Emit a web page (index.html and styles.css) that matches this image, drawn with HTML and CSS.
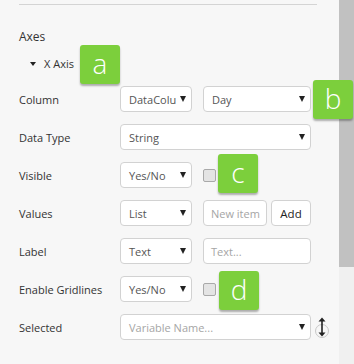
FILE: index.html
```html
<!DOCTYPE html>
<html lang="en">
<head>
  <meta charset="UTF-8">
  <meta name="viewport" content="width=device-width, initial-scale=1.0">
  <title>Axes</title>
  <link rel="stylesheet" href="styles.css">
</head>
<body>
  <div class="screen">
    <div class="panel">
      <div class="rule"></div>
      <h4 class="section-title">Axes</h4>
      <div class="axis-toggle"><span class="caret-down"></span>X Axis</div>

      <div class="fields">
        <div class="field-label">Column</div>
        <div class="controls">
          <div class="select small"><span>DataColu</span><i class="arrow"></i></div>
          <div class="select medium"><span>Day</span><i class="arrow"></i></div>
        </div>

        <div class="field-label">Data Type</div>
        <div class="controls">
          <div class="select wide"><span>String</span><i class="arrow"></i></div>
        </div>

        <div class="field-label">Visible</div>
        <div class="controls">
          <div class="select small"><span>Yes/No</span><i class="arrow"></i></div>
          <span class="checkbox"></span>
        </div>

        <div class="field-label">Values</div>
        <div class="controls">
          <div class="select small"><span>List</span><i class="arrow"></i></div>
          <div class="input short placeholder">New item</div>
          <div class="btn">Add</div>
        </div>

        <div class="field-label">Label</div>
        <div class="controls">
          <div class="select small"><span>Text</span><i class="arrow"></i></div>
          <div class="input medium placeholder">Text...</div>
        </div>

        <div class="field-label">Enable Gridlines</div>
        <div class="controls">
          <div class="select small"><span>Yes/No</span><i class="arrow"></i></div>
          <span class="checkbox"></span>
        </div>

        <div class="field-label">Selected</div>
        <div class="controls">
          <div class="select wide"><span class="placeholder">Variable Name...</span><i class="arrow"></i></div>
          <svg class="sort-icon" width="16" height="26" viewBox="0 0 16 26">
            <circle cx="8" cy="17" r="6.5" fill="none" stroke="#c8c8c8" stroke-width="1"/>
            <line x1="8" y1="5" x2="8" y2="21" stroke="#222" stroke-width="1.6"/>
            <path d="M4.5 7.5 L8 3.5 L11.5 7.5 Z" fill="#222"/>
            <path d="M4.5 18.5 L8 22.5 L11.5 18.5 Z" fill="#222"/>
          </svg>
        </div>
      </div>
    </div>

    <div class="scrollbar"><div class="thumb"></div></div>

    <div class="badge badge-a">a</div>
    <div class="badge badge-b">b</div>
    <div class="badge badge-c">c</div>
    <div class="badge badge-d">d</div>
  </div>
</body>
</html>
```

FILE: styles.css
```css
body {
  margin: 0;
  font-family: "Open Sans", Arial, sans-serif;
  background: #f7f7f7;
  color: #333333;
}

.screen {
  position: relative;
  display: flex;
  width: 354px;
  height: 364px;
  overflow: hidden;
}

.panel {
  width: 320px;
  padding: 4px 0 0 19px;
}

.rule {
  width: 298px;
  height: 1px;
  background: #d4d4d4;
}

.section-title {
  margin: 24px 0 0;
  font-size: 12px;
  font-weight: 400;
  line-height: 16px;
}

.axis-toggle {
  display: flex;
  align-items: center;
  margin: 11px 0 0 11px;
  font-size: 11px;
  line-height: 16px;
}

.caret-down {
  width: 0;
  height: 0;
  margin-right: 8px;
  border-left: 3px solid transparent;
  border-right: 3px solid transparent;
  border-top: 4px solid #222;
}

.fields {
  display: grid;
  grid-template-columns: 101px 1fr;
  grid-auto-rows: 26px;
  row-gap: 12px;
  margin-top: 14px;
}

.field-label {
  display: flex;
  align-items: center;
  font-size: 11px;
  white-space: nowrap;
}

.controls {
  display: flex;
  align-items: center;
  gap: 11px;
}

.select, .input, .btn {
  box-sizing: border-box;
  height: 26px;
  background: #ffffff;
  border: 1px solid #d2d2d2;
  border-radius: 4px;
  font-size: 11px;
  color: #555555;
  display: flex;
  align-items: center;
  white-space: nowrap;
  overflow: hidden;
}

.select {
  justify-content: space-between;
  gap: 2px;
  padding: 0 5px 0 8px;
}

.small { width: 72px; }
.medium { width: 108px; }
.wide { width: 191px; }
.short { width: 64px; }

.input {
  padding: 0 7px;
}

.placeholder {
  color: #a5a5a5;
}

.btn {
  width: 40px;
  margin-left: -7px;
  justify-content: center;
  color: #222222;
  font-size: 11.5px;
}

.arrow {
  flex: none;
  width: 0;
  height: 0;
  border-left: 3.5px solid transparent;
  border-right: 3.5px solid transparent;
  border-top: 6px solid #222;
}

.checkbox {
  box-sizing: border-box;
  width: 13px;
  height: 13px;
  background: #e4e4e4;
  border: 1px solid #a9a9a9;
  border-radius: 2px;
}

.sort-icon {
  margin-left: -8px;
}

.scrollbar {
  width: 15px;
  margin-left: auto;
  background: #f0f0f0;
}

.thumb {
  height: 267px;
  background: #c1c1c1;
}

.badge {
  position: absolute;
  width: 40px;
  height: 39px;
  background: #7ccf3c;
  border-radius: 3px;
  box-shadow: 0 2px 2px rgba(0, 0, 0, 0.3);
  color: #ffffff;
  font-size: 28px;
  font-weight: 300;
  line-height: 36px;
  text-align: center;
}

.badge-a { left: 80px; top: 45px; }
.badge-b { left: 313px; top: 80px; }
.badge-c { left: 218px; top: 154px; }
.badge-d { left: 219px; top: 271px; }
```
